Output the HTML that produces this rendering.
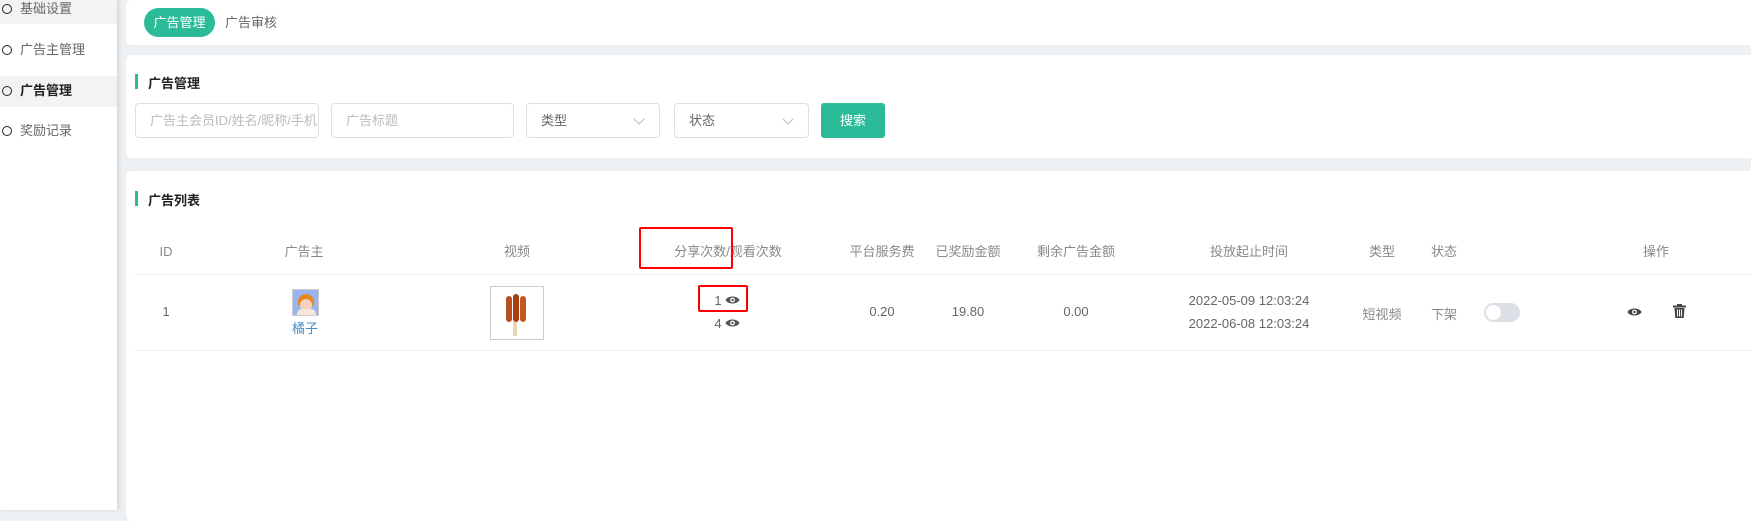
<!DOCTYPE html>
<html><head><meta charset="utf-8"><style>
*{margin:0;padding:0;box-sizing:border-box}
body{width:1751px;height:510px;overflow:hidden;background:#eef1f4;font-family:"Liberation Sans","Noto Sans CJK SC",sans-serif;font-size:13px;color:#606266;position:relative}
.abs{position:absolute}
.side{left:0;top:0;width:117px;height:510px;background:#fff;box-shadow:2px 0 4px rgba(0,0,0,.12)}
.si{position:absolute;left:0;width:117px;height:30px;line-height:30px;padding-left:20px;font-size:13px;color:#666}
.si:before{content:"";position:absolute;left:2px;top:10px;width:8px;height:8px;border:1.6px solid #222;border-radius:50%}
.card{background:#fff;border-radius:6px}
.bar{width:3px;height:15px;background:#2bbb98}
.inp{border:1px solid #dcdfe6;border-radius:4px;height:35px;top:103px;line-height:33px;padding-left:14px;color:#bbb;font-size:13px;background:#fff;overflow:hidden;white-space:nowrap}
.sel{color:#666}
.sel:after{content:"";position:absolute;right:16px;top:11px;width:7px;height:7px;border-right:1px solid #bbb;border-bottom:1px solid #bbb;transform:rotate(45deg)}
.th{top:242px;height:20px;line-height:20px;font-size:13px;color:#888;transform:translateX(-50%);white-space:nowrap}
.td{font-size:13px;color:#666;transform:translateX(-50%);white-space:nowrap}
.red{border:2px solid #f00;border-radius:2px}
</style></head><body>
<div class="abs side">
 <div class="si" style="top:-6px;background:#f3f3f3">基础设置</div>
 <div class="si" style="top:35px">广告主管理</div>
 <div class="si" style="top:76px;background:#f3f3f3;color:#222;font-weight:bold;height:31px">广告管理</div>
 <div class="si" style="top:116px">奖励记录</div>
</div>
<div class="abs card" style="left:126px;top:0;width:1640px;height:45px"></div>
<div class="abs" style="left:144px;top:8px;width:71px;height:29px;border-radius:15px;background:#2bbb98;color:#fff;line-height:29px;text-align:center;font-size:13px">广告管理</div>
<div class="abs" style="left:225px;top:8px;line-height:29px;color:#666">广告审核</div>
<div class="abs card" style="left:126px;top:55px;width:1640px;height:103px"></div>
<div class="abs bar" style="left:135px;top:74px"></div>
<div class="abs" style="left:148px;top:73px;color:#222;font-weight:bold;font-size:13px">广告管理</div>
<div class="abs inp" style="left:135px;width:184px">广告主会员ID/姓名/昵称/手机</div>
<div class="abs inp" style="left:331px;width:183px">广告标题</div>
<div class="abs inp sel" style="left:526px;width:134px">类型</div>
<div class="abs inp sel" style="left:674px;width:135px">状态</div>
<div class="abs" style="left:821px;top:103px;width:64px;height:35px;background:#2bbb98;border-radius:3px;color:#fff;text-align:center;line-height:35px">搜索</div>
<div class="abs card" style="left:126px;top:171px;width:1640px;height:350px"></div>
<div class="abs bar" style="left:135px;top:191px"></div>
<div class="abs" style="left:148px;top:190px;color:#222;font-weight:bold">广告列表</div>
<div class="abs th" style="left:166px">ID</div>
<div class="abs th" style="left:304px">广告主</div>
<div class="abs th" style="left:517px">视频</div>
<div class="abs th" style="left:728px">分享次数/观看次数</div>
<div class="abs th" style="left:882px">平台服务费</div>
<div class="abs th" style="left:968px">已奖励金额</div>
<div class="abs th" style="left:1076px">剩余广告金额</div>
<div class="abs th" style="left:1249px">投放起止时间</div>
<div class="abs th" style="left:1382px">类型</div>
<div class="abs th" style="left:1444px">状态</div>
<div class="abs th" style="left:1656px">操作</div>
<div class="abs" style="left:135px;top:274px;width:1620px;height:1px;background:#ebeef5"></div>
<div class="abs" style="left:135px;top:350px;width:1620px;height:1px;background:#ebeef5"></div>
<div class="abs td" style="left:166px;top:304px">1</div>
<div class="abs" style="left:292px;top:289px;width:27px;height:27px;border:1px solid #ccc;background:#9ab4f0;overflow:hidden">
 <div class="abs" style="left:5px;top:4px;width:16px;height:12px;background:#e88a1a;border-radius:8px 8px 2px 2px"></div>
 <div class="abs" style="left:7px;top:9px;width:12px;height:12px;background:#f4d0c0;border-radius:50%"></div>
 <div class="abs" style="left:4px;top:19px;width:19px;height:8px;background:#f6e8d8;border-radius:5px 5px 0 0"></div>
</div>
<div class="abs td" style="left:305px;top:318px;color:#4a90c2;font-size:13px">橘子</div>
<div class="abs" style="left:490px;top:286px;width:54px;height:54px;border:1px solid #ccc;background:#fff">
 <div class="abs" style="left:15px;top:9px;width:6px;height:26px;background:#b8501e;border-radius:3px"></div>
 <div class="abs" style="left:22px;top:7px;width:6px;height:28px;background:#a83e14;border-radius:3px"></div>
 <div class="abs" style="left:29px;top:9px;width:6px;height:26px;background:#c05a22;border-radius:3px"></div>
 <div class="abs" style="left:22px;top:35px;width:4px;height:14px;background:#e8d8b0"></div>
</div>
<div class="abs td" style="left:718px;top:293px">1</div>
<div class="abs td" style="left:718px;top:316px">4</div>
<svg class="abs" style="left:725px;top:294px" width="15" height="12" viewBox="0 0 16 12"><path d="M0.5 6C3 1 13 1 15.5 6C13 11 3 11 .5 6Z" fill="#555"/><circle cx="8" cy="6" r="2.6" fill="#fff"/><circle cx="8" cy="6" r="1.3" fill="#555"/></svg>
<svg class="abs" style="left:725px;top:317px" width="15" height="12" viewBox="0 0 16 12"><path d="M0.5 6C3 1 13 1 15.5 6C13 11 3 11 .5 6Z" fill="#555"/><circle cx="8" cy="6" r="2.6" fill="#fff"/><circle cx="8" cy="6" r="1.3" fill="#555"/></svg>
<div class="abs td" style="left:882px;top:304px">0.20</div>
<div class="abs td" style="left:968px;top:304px">19.80</div>
<div class="abs td" style="left:1076px;top:304px">0.00</div>
<div class="abs td" style="left:1249px;top:293px">2022-05-09 12:03:24</div>
<div class="abs td" style="left:1249px;top:316px">2022-06-08 12:03:24</div>
<div class="abs td" style="left:1382px;top:304px;color:#888">短视频</div>
<div class="abs td" style="left:1444px;top:304px;color:#888">下架</div>
<div class="abs" style="left:1484px;top:303px;width:36px;height:19px;border-radius:10px;background:#dcdfe6"><div class="abs" style="left:2px;top:2px;width:15px;height:15px;border-radius:50%;background:#fff"></div></div>
<svg class="abs" style="left:1627px;top:306px" width="15" height="12" viewBox="0 0 16 12"><path d="M0.5 6C3 1 13 1 15.5 6C13 11 3 11 .5 6Z" fill="#444"/><circle cx="8" cy="6" r="2.6" fill="#fff"/><circle cx="8" cy="6" r="1.3" fill="#444"/></svg>
<svg class="abs" style="left:1673px;top:304px" width="13" height="14" viewBox="0 0 13 14"><rect x="0" y="1.5" width="13" height="2" fill="#444"/><rect x="4" y="0" width="5" height="2" fill="#444"/><path d="M1.5 4H11.5L10.7 14H2.3Z" fill="#444"/><rect x="4" y="5.5" width="1" height="7" fill="#fff"/><rect x="6" y="5.5" width="1" height="7" fill="#fff"/><rect x="8" y="5.5" width="1" height="7" fill="#fff"/></svg>
<div class="abs red" style="left:639px;top:227px;width:94px;height:42px"></div>
<div class="abs red" style="left:698px;top:285px;width:50px;height:27px"></div>
</body></html>
